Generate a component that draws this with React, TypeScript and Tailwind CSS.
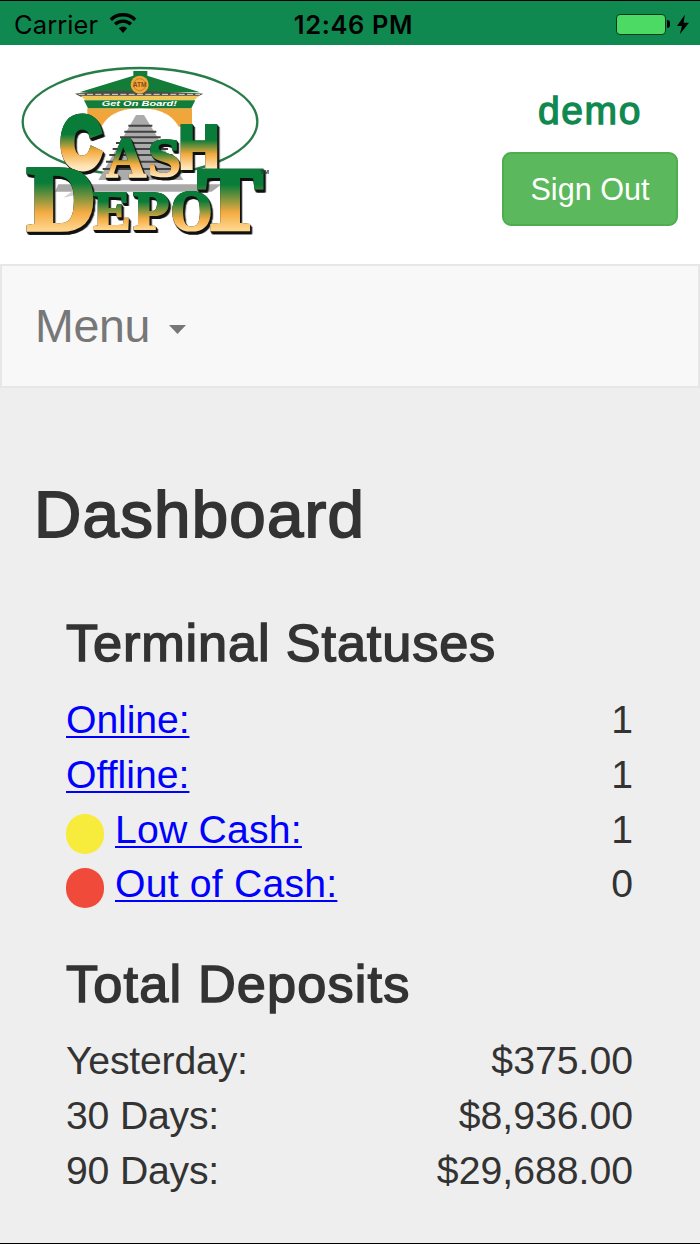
const statuses = [
  { label: 'Online:', value: '1', dot: '', spacing: 'tracking-[-0.1px]' },
  { label: 'Offline:', value: '1', dot: '', spacing: 'tracking-normal' },
  { label: 'Low Cash:', value: '1', dot: 'bg-[#f7eb3b]', spacing: 'tracking-[0.2px]' },
  { label: 'Out of Cash:', value: '0', dot: 'bg-[#f04a3b]', spacing: 'tracking-[0.2px]' },
];

const deposits = [
  { label: 'Yesterday:', value: '$375.00' },
  { label: '30 Days:', value: '$8,936.00' },
  { label: '90 Days:', value: '$29,688.00' },
];

export default function App() {
  return (
    <div className="flex h-[1244px] w-[700px] flex-col overflow-hidden border-y border-black bg-[#eeeeee] font-['Liberation_Sans',Arial,sans-serif] text-[#333333]">
      <StatusBar />

      <header className="flex h-[219px] shrink-0 justify-between bg-white pr-[22px] pl-[10px]">
        <div className="pt-[10px]">
          <Logo />
        </div>
        <div className="flex w-[176px] flex-col items-center pt-[43px]">
          <span className="text-[39px] leading-[46px] tracking-[1.6px] text-[#0f8950] [-webkit-text-stroke:1.3px_#0f8950]">demo</span>
          <button className="mt-[18px] h-[74px] w-full shrink-0 rounded-[9px] border-2 border-[#4cae4c] bg-[#5cb85c] pt-px text-[30.6px] text-white">
            Sign Out
          </button>
        </div>
      </header>

      <nav className="flex h-[124px] shrink-0 items-center border-2 border-[#e7e7e7] bg-[#f8f8f8] px-[33px] text-[#777777]">
        <span className="text-[46.5px] leading-[52px] tracking-[-0.3px]">Menu</span>
        <svg className="mt-[7px] ml-[19px]" width="17" height="9" viewBox="0 0 17 9" fill="currentColor">
          <path d="M0 0h17L8.500 9z" />
        </svg>
      </nav>

      <main className="px-[34px] pt-[91px]">
        <h1 className="text-[65.500px] leading-[72px] tracking-[1.2px] [-webkit-text-stroke:1.8px_#333333]">Dashboard</h1>
        <div className="pt-[63px] pr-[33px] pl-8">
          <SectionTitle text="Terminal Statuses" spacing="tracking-[0.85px]" />
          <ul className="pt-[21.4px] pb-[42.6px]">
            {statuses.map((row) => (
              <li key={row.label} className="flex h-[54.7px] items-center text-[39.2px] leading-[54.7px]">
                {row.dot && <span className={'mt-[7px] mr-[11px] h-[40px] w-[38px] rounded-full ' + row.dot} />}
                <a
                  href="#"
                  className={'text-[#0000ff] underline decoration-2 underline-offset-[3px] [text-decoration-skip-ink:none] ' + row.spacing}
                >
                  {row.label}
                </a>
                <span className="ml-auto">{row.value}</span>
              </li>
            ))}
          </ul>

          <SectionTitle text="Total Deposits" spacing="tracking-[1.15px]" />
          <ul className="pt-[21.4px]">
            {deposits.map((row) => (
              <li key={row.label} className="flex h-[54.7px] justify-between text-[39.2px] leading-[54.7px]">
                <span className="tracking-[-0.2px]">{row.label}</span>
                <span>{row.value}</span>
              </li>
            ))}
          </ul>
        </div>
      </main>
    </div>
  );
}

function SectionTitle({ text, spacing }: { text: string; spacing: string }) {
  return <h2 className={'text-[52.3px] leading-[58px] [-webkit-text-stroke:1.5px_#333333] ' + spacing}>{text}</h2>;
}

function StatusBar() {
  return (
    <div className="grid h-[44px] shrink-0 grid-cols-3 items-center bg-[#0f8950] px-[10px] font-[Inter,sans-serif] text-[25.500px] leading-[44px] text-black">
      <div className="flex items-center gap-[11px] pt-[2px] pl-[4px]">
        <span className="tracking-[0.1px]">Carrier</span>
        <svg className="-mt-[3px]" width="28" height="21" viewBox="0 0 28 21" fill="none" stroke="currentColor" strokeWidth="3.400">
          <path d="M1.800 6.700a17.500 17.500 0 0 1 24.400 0" />
          <path d="M6.100 11.300a11.300 11.300 0 0 1 15.800 0" />
          <path d="M9.800 15.200a6 6 0 0 1 8.400 0L14 20z" fill="currentColor" stroke="none" />
        </svg>
      </div>
      <span className="pt-[2px] pl-[7px] text-center font-semibold tracking-[0.6px]">12:46 PM</span>
      <div className="flex items-center justify-end">
        <div className="h-[21px] w-[50px] rounded-[4px] border border-[#07391f] bg-[#4cd964]" />
        <div className="ml-[1px] h-[8px] w-[3px] rounded-r-full bg-black" />
        <svg className="mr-[1px] ml-[7px]" width="12" height="21" viewBox="0 0 13 21" fill="currentColor">
          <path d="M8.500 0L0 12h5.300L3 21l10-12.500H7.200z" />
        </svg>
      </div>
    </div>
  );
}

const logoLetters = [
  { char: 'A', x: 287, y: 366, sx: 1.68, sy: 1.74, weight: 3, font: 'Liberation Serif', fill: 'url(#cash)' },
  { char: 'S', x: 413, y: 364, sx: 1.8, sy: 1.66, weight: 3, font: 'Liberation Serif', fill: 'url(#cash)' },
  { char: 'H', x: 507, y: 338, sx: 1.66, sy: 1.82, weight: 7, font: 'Liberation Sans', fill: 'url(#cash)' },
  { char: 'C', x: 154, y: 335, sx: 1.64, sy: 2.14, weight: 11, font: 'Liberation Sans', fill: 'url(#cash)' },
  { char: 'D', x: 50, y: 525, sx: 2.88, sy: 2.78, weight: 4, font: 'Liberation Serif', fill: 'url(#depot)' },
  { char: 'E', x: 250, y: 522, sx: 1.68, sy: 1.62, weight: 4, font: 'Liberation Serif', fill: 'url(#depot)' },
  { char: 'P', x: 370, y: 522, sx: 1.76, sy: 1.62, weight: 4, font: 'Liberation Serif', fill: 'url(#depot)' },
  { char: 'O', x: 482, y: 524, sx: 1.6, sy: 1.68, weight: 4, font: 'Liberation Serif', fill: 'url(#depot)' },
  { char: 'T', x: 564, y: 523, sx: 2.9, sy: 2.64, weight: 5, font: 'Liberation Serif', fill: 'url(#depot)' },
];

function Logo() {
  return (
    <svg width="270" height="190" viewBox="0 0 810 570" role="img" aria-label="Cash Depot">
      <defs>
        <linearGradient id="cash" x1="0" y1="-70" x2="0" y2="0" gradientUnits="userSpaceOnUse">
          <stop offset="0.35" stopColor="#087c38" />
          <stop offset="0.68" stopColor="#f4a93c" />
          <stop offset="1" stopColor="#ffe6bb" />
        </linearGradient>
        <linearGradient id="depot" x1="0" y1="-68" x2="0" y2="0" gradientUnits="userSpaceOnUse">
          <stop offset="0.25" stopColor="#087c38" />
          <stop offset="0.72" stopColor="#f4ab42" />
          <stop offset="1" stopColor="#ffd58c" />
        </linearGradient>
      </defs>

      <ellipse cx="390" cy="200" rx="352" ry="161" fill="#fff" stroke="#287c48" strokeWidth="7" />

      {/* depot building */}
      <path d="M232 160h314v55H232z" fill="#f0a63a" />
      <path d="M265 340V235Q290 160 390 160T515 235V340z" fill="#fff" />
      <path d="M370 48h42v14l158 50H208L370 62z" fill="#137c39" />
      <path d="M195 116Q260 104 390 108T580 116L560 126H214z" fill="#4b4d48" />
      <path d="M212 122h356l-16 14H226z" fill="#efc85b" />
      <path d="M222 136h334l-12 24H234z" fill="#137c39" />
      <path d="M206 118h364" stroke="#e6dfc8" strokeWidth="3" strokeDasharray="18 7" />
      <circle cx="389" cy="89" r="27" fill="#efaa3b" />
      <circle cx="389" cy="89" r="18" fill="none" stroke="#ce7929" strokeWidth="3" />
      <text x="389" y="96" fontSize="20" fontWeight="bold" textAnchor="middle" fill="#8c4b17">ATM</text>
      <text x="388" y="153" fontSize="20" fontWeight="bold" fontStyle="italic" textAnchor="middle" textLength="226" lengthAdjust="spacingAndGlyphs" fill="#fff">
        Get On Board!
      </text>

      {/* railway track */}
      <path d="M378 180h24L520 375H265z" fill="#ababab" />
      <path d="M355 212h72M343 230h96M330 247h122M318 264h146M308 282h166M298 300h190M288 320h212M278 342h232" stroke="#424242" strokeWidth="6" />
      <path d="M145 388h490l-30 22H135z" fill="#a9a9a9" />
      <path d="M185 410l-25 18 40-9 12-9z" fill="#d0d0d0" />

      {logoLetters.map((l) => (
        <g key={l.char} className="[filter:drop-shadow(0_0_2px_#1c3018)_drop-shadow(4px_6px_0_#111)_drop-shadow(2px_3px_0_#111)]">
          <text
            transform={`translate(${l.x} ${l.y}) scale(${l.sx} ${l.sy})`}
            fontSize="100"
            fontWeight="bold"
            fontFamily={l.font}
            fill={l.fill}
            stroke={l.fill}
            strokeWidth={l.weight}
          >
            {l.char}
          </text>
        </g>
      ))}
      <text x="751" y="358" fontSize="18" fontWeight="bold" fill="#333">TM</text>
    </svg>
  );
}
